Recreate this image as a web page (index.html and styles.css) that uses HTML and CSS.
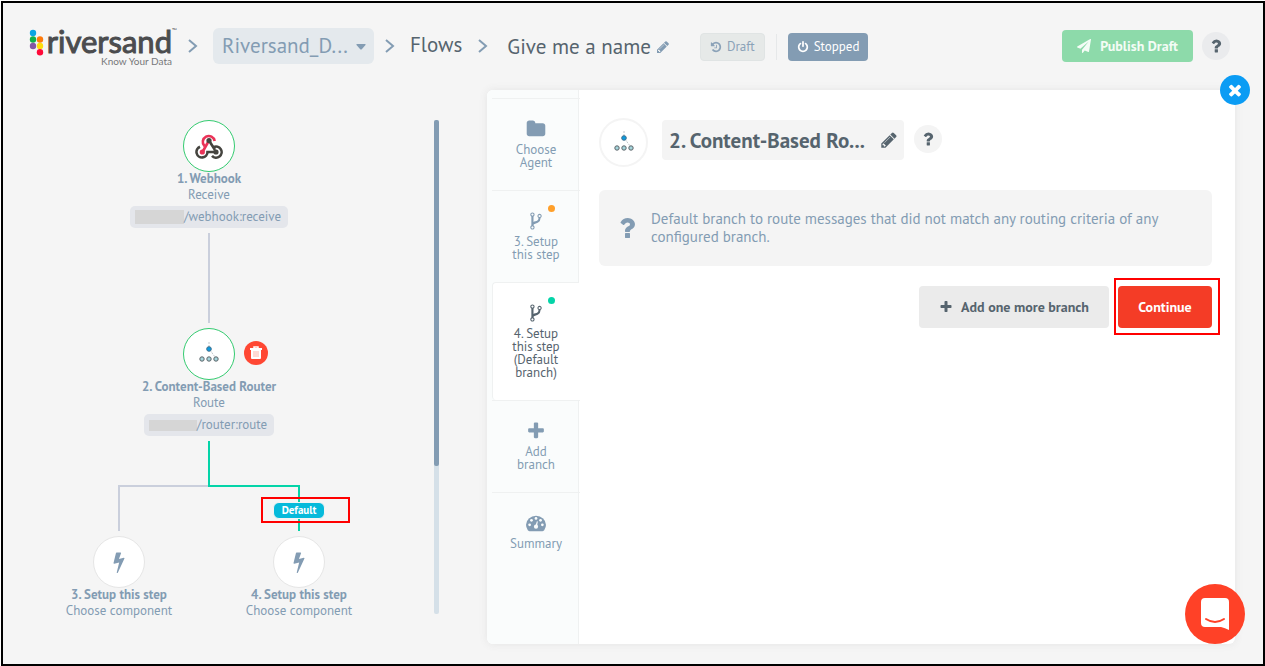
FILE: index.html
```html
<!DOCTYPE html>
<html lang="en">
<head>
<meta charset="utf-8">
<title>Flow designer</title>
<link rel="stylesheet" href="styles.css">
</head>
<body>
<svg class="defs" aria-hidden="true">
  <symbol id="pencil" viewBox="0 0 1792 1792"><path d="M491 1536l91-91-235-235-91 91v107h128v128h107zm523-928q0-22-22-22-10 0-17 7l-542 542q-7 7-7 17 0 22 22 22 10 0 17-7l542-542q7-7 7-17zm-54-192l416 416-832 832h-416v-416zm683 96q0 53-37 90l-166 166-416-416 166-165q36-38 90-38 53 0 91 38l235 234q37 39 37 91z"/></symbol>
  <symbol id="plus" viewBox="0 0 1792 1792"><path d="M1600 736v192q0 40-28 68t-68 28h-416v416q0 40-28 68t-68 28h-192q-40 0-68-28t-28-68v-416h-416q-40 0-68-28t-28-68v-192q0-40 28-68t68-28h416v-416q0-40 28-68t68-28h192q40 0 68 28t28 68v416h416q40 0 68 28t28 68z"/></symbol>
  <symbol id="question" viewBox="0 0 1792 1792"><path d="M1088 1256v240q0 16-12 28t-28 12h-240q-16 0-28-12t-12-28v-240q0-16 12-28t28-12h240q16 0 28 12t12 28zm316-600q0 54-15.500 101t-35 76.500-55 59.500-57.500 43.500-61 35.500q-41 23-68.500 65t-27.500 67q0 17-12 32.500t-28 15.500h-240q-15 0-25.500-18.500t-10.500-37.500v-45q0-83 65-156.500t143-108.500q59-27 84-56t25-76q0-42-46.500-74t-107.500-32q-65 0-108 29-35 25-107 115-13 16-31 16-12 0-25-8l-164-125q-13-10-15.500-25t5.500-28q160-266 464-266 80 0 161 31t146 83 106 127.500 41 158.500z"/></symbol>
  <symbol id="times" viewBox="0 0 1792 1792"><path d="M1490 1322q0 40-28 68l-136 136q-28 28-68 28t-68-28l-294-294-294 294q-28 28-68 28t-68-28l-136-136q-28-28-28-68t28-68l294-294-294-294q-28-28-28-68t28-68l136-136q28-28 68-28t68 28l294 294 294-294q28-28 68-28t68 28l136 136q28 28 28 68t-28 68l-294 294 294 294q28 28 28 68z"/></symbol>
  <symbol id="fork" viewBox="0 0 1792 1792"><path d="M672 1472q0-40-28-68t-68-28-68 28-28 68 28 68 68 28 68-28 28-68zm0-1152q0-40-28-68t-68-28-68 28-28 68 28 68 68 28 68-28 28-68zm640 128q0-40-28-68t-68-28-68 28-28 68 28 68 68 28 68-28 28-68zm96 0q0 52-26 96.500t-70 69.500q-2 287-226 414-67 38-203 81-128 40-169.500 71t-41.500 100v26q44 25 70 69.500t26 96.500q0 80-56 136t-136 56-136-56-56-136q0-52 26-96.500t70-69.500v-820q-44-25-70-69.500t-26-96.500q0-80 56-136t136-56 136 56 56 136q0 52-26 96.500t-70 69.500v497q54-26 154-57 55-17 87.500-29.500t70.500-31 59-39.500 40.500-51 28-69.500 8.500-91.500q-44-25-70-69.500t-26-96.500q0-80 56-136t136-56 136 56 56 136z"/></symbol>
  <symbol id="folder" viewBox="0 0 1792 1792"><path d="M1728 608v704q0 92-66 158t-158 66h-1216q-92 0-158-66t-66-158v-960q0-92 66-158t158-66h320q92 0 158 66t66 158v32h672q92 0 158 66t66 158z"/></symbol>
  <symbol id="power" viewBox="0 0 1792 1792"><path d="M1664 896q0 156-61 298t-164 245-245 164-298 61-298-61-245-164-164-245-61-298q0-182 80.500-343t226.500-270q43-32 95.500-25t83.500 50q32 42 24.500 94.500t-49.500 84.500q-98 74-151.500 181t-53.500 228q0 104 40.500 198.500t109.500 163.500 163.500 109.500 198.500 40.500 198.500-40.500 163.500-109.500 109.500-163.500 40.500-198.500q0-121-53.500-228t-151.500-181q-42-32-49.500-84.500t24.500-94.500q31-43 84-50t95 25q146 109 226.500 270t80.500 343zm-640-768v640q0 52-38 90t-90 38-90-38-38-90v-640q0-52 38-90t90-38 90 38 38 90z"/></symbol>
  <symbol id="history" viewBox="0 0 1792 1792"><path d="M1664 896q0 156-61 298t-164 245-245 164-298 61q-172 0-327-72.500t-264-204.500q-7-10-6.500-22.500t8.500-20.500l137-138q10-9 25-9 16 2 23 12 73 95 179 147t225 52q104 0 198.500-40.500t163.500-109.500 109.500-163.500 40.500-198.500-40.500-198.500-109.500-163.500-163.500-109.500-198.500-40.500q-98 0-188 35.500t-160 101.500l137 138q31 30 14 69-17 40-59 40h-448q-26 0-45-19t-19-45v-448q0-42 40-59 39-17 69 14l130 129q107-101 244.500-156.500t284.500-55.500q156 0 298 61t245 164 164 245 61 298zm-640-288v448q0 14-9 23t-23 9h-320q-14 0-23-9t-9-23v-64q0-14 9-23t23-9h224v-352q0-14 9-23t23-9h64q14 0 23 9t9 23z"/></symbol>
  <symbol id="bolt" viewBox="0 0 1792 1792"><path d="M1333 566q18 20 7 44l-540 1157q-13 25-42 25-4 0-14-2-17-5-25.500-19t-4.500-30l197-808-406 101q-4 1-12 1-18 0-31-11-18-15-13-39l201-825q4-14 16-23t28-9h328q19 0 32 12.500t13 29.500q0 8-5 18l-171 463 396-98q8-2 12-2 19 0 34 15z"/></symbol>
  <symbol id="plane" viewBox="0 0 1792 1792"><path d="M1764 11q33 24 27 64l-256 1536q-5 29-32 45-14 8-31 8-11 0-24-5l-453-185-242 295q-18 23-49 23-13 0-22-4-19-7-30.500-23.500t-11.500-36.500v-349l864-1059-1069 925-395-162q-37-14-40-55-2-40 32-59l1664-960q15-9 32-9 20 0 36 11z"/></symbol>
  <symbol id="chevron" viewBox="0 0 10 14"><path d="M1 1l7 6-7 6" fill="none" stroke="currentColor" stroke-width="2"/></symbol>
  <symbol id="router" viewBox="0 0 24 24"><path d="M12 0v6M13 8l5 7" stroke="#c3c8cc" stroke-dasharray="2 1"/><circle cx="12" cy="7" r="2.300" fill="#0c9be0" stroke="#3f6f8c"/><g fill="#a5d5dc" stroke="#5d6468"><circle cx="5" cy="17" r="2.200"/><circle cx="12" cy="17" r="2.200"/><circle cx="19" cy="17" r="2.200"/></g></symbol>
  <symbol id="gauge" viewBox="0 0 22 18"><path d="M2 17Q0 14 0 11a11 10 0 0 1 22 0q0 3-2 6-1 1-2 1H4q-1 0-2-1z"/><g fill="#fafcfc"><circle cx="4" cy="11" r="1.500"/><circle cx="6" cy="6" r="1.500"/><circle cx="11" cy="4" r="1.500"/><circle cx="16" cy="6" r="1.500"/><circle cx="18" cy="11" r="1.500"/><circle cx="11" cy="13" r="2.300"/><path d="M10 13l2-6 1 .3-1 6z"/></g></symbol>
</svg>
<div class="frame">
  <header class="topbar">
    <a class="logo" href="#" aria-label="riversand, Know Your Data">
      <svg class="logo-dots" viewBox="0 0 15 28"><circle cx="4" cy="5" r="3.200" fill="#08a5e4"/><circle cx="4" cy="11.500" r="3.200" fill="#10b04b"/><circle cx="4" cy="18" r="3.200" fill="#8458a4"/><circle cx="11" cy="11.500" r="3.200" fill="#ff7a0a"/><circle cx="11" cy="18" r="3.200" fill="#ffdd0b"/><circle cx="11" cy="24.300" r="3.200" fill="#ff0a38"/></svg>
      <span class="logo-text"><span class="logo-name">riversand</span><span class="logo-tag">Know Your Data</span></span>
      <span class="logo-tm">™</span>
    </a>
    <svg class="chevron"><use href="#chevron"/></svg>
    <span class="workspace">
      <select class="workspace-select" aria-label="Workspace"><option>Riversand_D...</option></select>
      <svg class="caret" viewBox="0 0 10 6"><path d="M1 0h8q1 0 .5 1L6 5q-1 1-2 0L.5 1Q0 0 1 0z"/></svg>
    </span>
    <svg class="chevron"><use href="#chevron"/></svg>
    <a class="crumb" href="#">Flows</a>
    <svg class="chevron"><use href="#chevron"/></svg>
    <button class="flow-name">Give me a name <svg class="icon i14"><use href="#pencil"/></svg></button>
    <div class="status">
      <button class="pill draft"><svg class="icon i12"><use href="#history"/></svg>Draft</button>
      <span class="divider"></span>
      <button class="pill stopped"><svg class="icon i12"><use href="#power"/></svg>Stopped</button>
    </div>
    <button class="publish"><svg class="icon i14"><use href="#plane"/></svg>Publish Draft</button>
    <button class="help" aria-label="Help"><svg class="icon i18"><use href="#question"/></svg></button>
  </header>

  <main class="workspace-main">
    <section class="canvas" aria-label="Flow">
      <svg class="wires" viewBox="0 0 430 540" fill="none" stroke-width="2">
        <path d="M206 143v90M206 396H116v45" stroke="#cacfdc"/>
        <path d="M206 351v45h90v45" stroke="#04d4a8"/>
      </svg>
      <div class="node webhook">
        <span class="bubble done"><svg class="hook" viewBox="0 0 28 26" fill="none" stroke-width="2.600"><path d="M9.500 13.200A6 6 0 1 1 19.700 8" stroke="#ea3358"/><path d="M14 7.500L7.500 19" stroke="#ea3358"/><path d="M5 13.800A5.500 5.500 0 1 0 12.500 19h8.500M14 7.500l6 9.500M17 22.800a5.500 5.500 0 1 0 1.500-8.500" stroke="#45443f"/><circle cx="14" cy="7.500" r="2.600" fill="#45443f"/><circle cx="7.300" cy="19" r="2.600" fill="#ea3358"/><circle cx="21" cy="19" r="2.600" fill="#45443f"/></svg></span>
        <strong>1. Webhook</strong><span>Receive</span>
        <span class="tag"><i class="mask wide"></i>/webhook:receive</span>
      </div>
      <div class="node route">
        <span class="bubble done"><svg class="router"><use href="#router"/></svg></span>
        <strong>2. Content-Based Router</strong><span>Route</span>
        <span class="tag"><i class="mask"></i>/router:route</span>
      </div>
      <button class="delete" aria-label="Delete step"><svg viewBox="0 0 12 14" width="12" height="14"><path d="M4 2V1h4v1" fill="none" stroke="#fff" stroke-width="1.500"/><path d="M0 2h12v2H0zM1 4h10v8q0 1-1 1H2q-1 0-1-1z" fill="#fff"/><path d="M4 5v6M6 5v6M8 5v6" stroke="#ffb5a8"/></svg></button>
      <div class="node third"><span class="bubble"><svg class="icon i22"><use href="#bolt"/></svg></span><strong>3. Setup this step</strong><span>Choose component</span></div>
      <div class="node fourth"><span class="bubble"><svg class="icon i22"><use href="#bolt"/></svg></span><strong>4. Setup this step</strong><span>Choose component</span></div>
      <div class="branch-mark"><span class="badge">Default</span></div>
      <div class="scroll"><div class="thumb"></div></div>
    </section>

    <section class="panel">
      <nav class="tabs">
        <button class="tab"><svg class="icon i20"><use href="#folder"/></svg><span>Choose<br>Agent</span></button>
        <button class="tab"><svg class="icon i20"><use href="#fork"/></svg><i class="dot orange"></i><span>3. Setup<br>this step</span></button>
        <button class="tab active"><svg class="icon i20"><use href="#fork"/></svg><i class="dot green"></i><span>4. Setup<br>this step<br>(Default<br>branch)</span></button>
        <button class="tab"><svg class="icon i20"><use href="#plus"/></svg><span>Add<br>branch</span></button>
        <button class="tab"><svg class="icon i20"><use href="#gauge"/></svg><span>Summary</span></button>
      </nav>
      <div class="content">
        <div class="heading">
          <span class="avatar"><svg class="router"><use href="#router"/></svg></span>
          <button class="step-name">2. Content-Based Ro...<svg class="icon i18"><use href="#pencil"/></svg></button>
          <button class="help" aria-label="Step help"><svg class="icon i18"><use href="#question"/></svg></button>
        </div>
        <div class="info"><svg class="icon i28"><use href="#question"/></svg><p>Default branch to route messages that did not match any routing criteria of any configured branch.</p></div>
        <div class="actions">
          <button class="action"><svg class="icon i14"><use href="#plus"/></svg>Add one more branch</button>
          <span class="highlight"><button class="action primary">Continue</button></span>
        </div>
      </div>
      <button class="close" aria-label="Close"><svg class="icon i18"><use href="#times"/></svg></button>
    </section>
  </main>
  <button class="chat" aria-label="Open chat"><svg viewBox="0 0 28 32" width="28" height="32"><path d="M4 0h20q4 0 4 4v28q-4-2-8-3H4q-4 0-4-4V4q0-4 4-4z" fill="#fff"/><path d="M5 21q9 6 18 0" fill="none" stroke="#ff4127" stroke-width="2" stroke-linecap="round"/></svg></button>
</div>
</body>
</html>
```

FILE: styles.css
```css
* { box-sizing: border-box; }
body { margin: 0; padding: 1px 0 0 1px; background: #fff; color: #56646e; font-family: "PT Sans", Lato, sans-serif; font-size: 13px; }
button { font: inherit; color: inherit; border: 0; padding: 0; background: none; cursor: pointer; }
.defs { position: absolute; width: 0; height: 0; }
.icon { fill: currentColor; flex: none; }
.i12 { width: 12px; height: 12px; }
.i14 { width: 14px; height: 14px; }
.i18 { width: 18px; height: 18px; }
.i20 { width: 20px; height: 20px; }
.i22 { width: 22px; height: 22px; }
.i28 { width: 28px; height: 28px; }

.frame { position: relative; display: flex; flex-direction: column; min-height: calc(100vh - 1px); border: 2px solid #000; background: #f5f5f5; }

.topbar { display: flex; align-items: center; height: 85px; margin-bottom: 2px; padding: 0 33px 0 26px; }
.logo { display: flex; width: 149px; height: 38px; margin-top: 2px; color: #4b4c4e; text-decoration: none; }
.logo-dots { width: 15px; height: 28px; flex: none; }
.logo-text { display: flex; flex-direction: column; align-items: flex-end; width: 128px; padding-top: 1px; flex: none; }
.logo-name { font-family: Lato, sans-serif; font-size: 31px; line-height: 25px; font-weight: 400; -webkit-text-stroke: 1px currentColor; }
.logo-tag { font: 10px/14px Lato, sans-serif; color: #77787a; }
.logo-tm { font-size: 5px; line-height: 5px; }
.chevron { width: 10px; height: 14px; margin: 0 10px; color: #839cb3; flex: none; }
.workspace { position: relative; width: 161px; margin: 0 1px 0 5px; }
.workspace-select { display: block; width: 100%; height: 36px; padding: 0 24px 0 9px; border: 0; border-radius: 6px; background: #e4e9ed; color: #839cb3; font: inherit; font-size: 21px; appearance: none; }
.caret { position: absolute; right: 8px; top: 16px; width: 10px; height: 6px; fill: #839cb3; }
.crumb { margin: 0 6px 0 5px; padding-bottom: 2px; color: inherit; font-size: 21px; text-decoration: none; }
.flow-name { display: flex; align-items: center; gap: 5px; margin-left: 9px; padding-top: 2px; font-size: 21px; white-space: nowrap; }
.flow-name .icon { color: #839cb3; }
.status { display: flex; align-items: center; margin-left: 30px; padding-top: 2px; gap: 11px; }
.pill { display: flex; align-items: center; gap: 5px; height: 28px; padding: 0 9px; border-radius: 4px; }
.draft { background: #e6e9e8; border: 1px solid #e0e4e4; color: #8ba2b8; }
.stopped { background: #839cb3; color: #fff; }
.divider { width: 1px; height: 26px; background: #e6e8e9; }
.publish { display: flex; align-items: center; gap: 9px; height: 32px; margin-left: auto; padding: 0 15px; border-radius: 4px; background: #8ddaaa; color: #f4fcf6; font-size: 14px; font-weight: 700; }
.help { display: grid; place-items: center; width: 28px; height: 28px; border-radius: 50%; background: #eaebed; margin-left: 9px; flex: none; }

.workspace-main { display: flex; flex: 1; padding: 0 28px 20px 0; }
.canvas { position: relative; width: 484px; flex: none; color: #839cb3; }
.wires { position: absolute; left: 0; top: 0; width: 430px; height: 540px; }
.node { position: absolute; display: flex; flex-direction: column; align-items: center; width: 180px; line-height: 16px; }
.webhook { left: 116px; top: 30px; }
.route { left: 116px; top: 238px; }
.third { left: 26px; top: 446px; }
.fourth { left: 206px; top: 446px; }
.bubble { display: grid; place-items: center; width: 52px; height: 52px; margin-bottom: -1px; border: 1px solid #e6e6e6; border-radius: 50%; background: #fff; }
.bubble.done { border-color: #34cb70; }
.hook { width: 28px; height: 26px; }
.router { width: 24px; height: 24px; }
.tag { display: flex; align-items: center; height: 22px; margin-top: 3px; padding: 0 7px 0 5px; border-radius: 5px; background: #e4e6eb; white-space: nowrap; }
.mask { width: 48px; height: 11px; background: #d6d6d6; }
.mask.wide { width: 49px; height: 14px; }
.delete { position: absolute; left: 241px; top: 251px; display: grid; place-items: center; width: 24px; height: 24px; border-radius: 50%; background: #ff4733; }
.branch-mark { position: absolute; left: 258px; top: 407px; width: 89px; height: 26px; padding: 3px 0 0 10px; border: 2px solid #f00; }
.badge { display: block; width: 52px; height: 17px; border: 1px solid #f4f4f4; border-radius: 6px; background: #06badb; color: #fff; font-size: 11px; font-weight: 700; line-height: 15px; text-align: center; }
.scroll { position: absolute; left: 431px; top: 30px; width: 5px; height: 494px; border-radius: 2px; background: #d5e0e8; }
.thumb { height: 70%; border-radius: 2px; background: #839cb3; }

.panel { position: relative; display: flex; flex: 1; border-radius: 6px; background: #fff; box-shadow: 0 0 8px #e4e4e4; }
.tabs { width: 92px; flex: none; padding: 8px 0 0 5px; border-right: 1px solid #eff1f1; border-radius: 6px 0 0 6px; background: #fafcfc; color: #839cb3; }
.tab { position: relative; display: flex; flex-direction: column; align-items: center; gap: 4px; width: 88px; min-height: 92px; padding: 20px 0 21px; border-top: 1px solid #eff1f1; line-height: 13px; }
.tab.active { width: 87px; padding-bottom: 21px; border: 1px solid #eff1f1; border-right: 0; border-bottom: 0; border-radius: 4px 0 0 4px; background: #fff; color: #56646e; }
.dot { position: absolute; left: 56px; top: 14px; width: 7px; height: 7px; border-radius: 50%; }
.active .dot { left: 55px; }
.orange { background: #ffa02b; }
.green { background: #04d4a8; }
.content { flex: 1; padding: 28px 23px 20px 20px; }
.heading { display: flex; gap: 14px; height: 72px; }
.avatar { display: grid; place-items: center; width: 49px; height: 49px; border: 2px solid #f4f4f4; border-radius: 50%; }
.step-name { display: flex; align-items: center; justify-content: space-between; width: 242px; height: 40px; margin-top: 2px; padding: 0 6px 0 7px; border-radius: 4px; background: #f4f4f4; font-size: 21px; font-weight: 700; white-space: nowrap; }
.heading .help { margin: 7px 0 0 -4px; background: #f4f4f4; }
.info { display: flex; align-items: center; gap: 10px; min-height: 76px; padding: 10px 14px; border-radius: 6px; background: #f4f4f4; color: #839cb3; font-size: 15px; line-height: 18px; }
.info p { margin: 0; max-width: 520px; }
.actions { display: flex; justify-content: flex-end; align-items: center; gap: 5px; margin: 12px -8px 0 0; }
.action { display: flex; align-items: center; justify-content: center; gap: 8px; height: 42px; padding: 0 20px; border-radius: 4px; background: #ebebeb; font-size: 14px; font-weight: 700; }
.highlight { padding: 6px 6px 5px 2px; border: 2px solid #f00; }
.primary { width: 94px; background: #f43c26; color: #fff; }
.close { position: absolute; right: -15px; top: -15px; display: grid; place-items: center; width: 30px; height: 30px; border-radius: 50%; background: #0b9cf4; color: #fff; }
.chat { position: absolute; right: 18px; bottom: 20px; display: grid; place-items: center; width: 60px; height: 60px; border-radius: 50%; background: #ff4127; }
```
